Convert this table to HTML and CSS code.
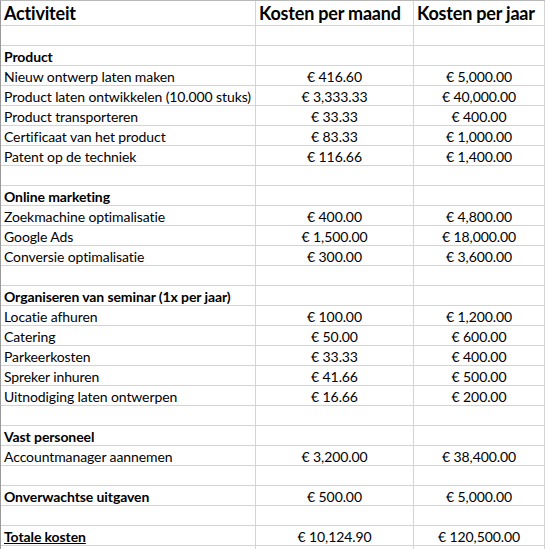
FILE: index.html
```html
<!DOCTYPE html>
<html>
<head>
<meta charset="utf-8">
<link rel="stylesheet" href="styles.css">
</head>
<body>
<div class="sheet">
  <div class="c h">Activiteit</div><div class="c h">Kosten per maand</div><div class="c h">Kosten per jaar</div>
  <div class="c"></div><div class="c"></div><div class="c"></div>
  <div class="c b">Product</div><div class="c"></div><div class="c"></div>
  <div class="c">Nieuw ontwerp laten maken</div><div class="c n">€ 416.60</div><div class="c n">€ 5,000.00</div>
  <div class="c">Product laten ontwikkelen (10.000 stuks)</div><div class="c n">€ 3,333.33</div><div class="c n">€ 40,000.00</div>
  <div class="c">Product transporteren</div><div class="c n">€ 33.33</div><div class="c n">€ 400.00</div>
  <div class="c">Certificaat van het product</div><div class="c n">€ 83.33</div><div class="c n">€ 1,000.00</div>
  <div class="c">Patent op de techniek</div><div class="c n">€ 116.66</div><div class="c n">€ 1,400.00</div>
  <div class="c"></div><div class="c"></div><div class="c"></div>
  <div class="c b">Online marketing</div><div class="c"></div><div class="c"></div>
  <div class="c">Zoekmachine optimalisatie</div><div class="c n">€ 400.00</div><div class="c n">€ 4,800.00</div>
  <div class="c">Google Ads</div><div class="c n">€ 1,500.00</div><div class="c n">€ 18,000.00</div>
  <div class="c">Conversie optimalisatie</div><div class="c n">€ 300.00</div><div class="c n">€ 3,600.00</div>
  <div class="c"></div><div class="c"></div><div class="c"></div>
  <div class="c b">Organiseren van seminar (1x per jaar)</div><div class="c"></div><div class="c"></div>
  <div class="c">Locatie afhuren</div><div class="c n">€ 100.00</div><div class="c n">€ 1,200.00</div>
  <div class="c">Catering</div><div class="c n">€ 50.00</div><div class="c n">€ 600.00</div>
  <div class="c">Parkeerkosten</div><div class="c n">€ 33.33</div><div class="c n">€ 400.00</div>
  <div class="c">Spreker inhuren</div><div class="c n">€ 41.66</div><div class="c n">€ 500.00</div>
  <div class="c">Uitnodiging laten ontwerpen</div><div class="c n">€ 16.66</div><div class="c n">€ 200.00</div>
  <div class="c"></div><div class="c"></div><div class="c"></div>
  <div class="c b">Vast personeel</div><div class="c"></div><div class="c"></div>
  <div class="c">Accountmanager aannemen</div><div class="c n">€ 3,200.00</div><div class="c n">€ 38,400.00</div>
  <div class="c"></div><div class="c"></div><div class="c"></div>
  <div class="c b">Onverwachtse uitgaven</div><div class="c n">€ 500.00</div><div class="c n">€ 5,000.00</div>
  <div class="c"></div><div class="c"></div><div class="c"></div>
  <div class="c b u">Totale kosten</div><div class="c n">€ 10,124.90</div><div class="c n">€ 120,500.00</div>
  <div class="c"></div><div class="c"></div><div class="c"></div>
</div>
</body>
</html>
```
FILE: styles.css
```css
html, body {
  margin: 0;
  padding: 0;
  background: #ffffff;
}
body {
  width: 549px;
  height: 549px;
  overflow: hidden;
  font-family: Lato, "Open Sans", sans-serif;
  color: #000000;
}
.sheet {
  display: grid;
  grid-template-columns: 255px 158px 131px;
  grid-auto-rows: 20px;
  grid-template-rows: 25px;
  border-left: 1px solid #9a9a9a;
  border-top: 1px solid #b8b8b8;
  width: max-content;
}
.c {
  box-sizing: border-box;
  border-right: 1px solid #d4d4d4;
  border-bottom: 1px solid #d4d4d4;
  font-size: 14px;
  letter-spacing: -0.1px;
  line-height: 19px;
  padding: 1px 0 0 3px;
  white-space: nowrap;
  overflow: hidden;
}
.h {
  font-size: 18px;
  letter-spacing: -0.2px;
  font-weight: 700;
  line-height: 24px;
  padding-top: 0;
}
.b {
  font-weight: 700;
}
.u {
  text-decoration: underline;
}
.n {
  text-align: center;
  padding-left: 0;
}
```
